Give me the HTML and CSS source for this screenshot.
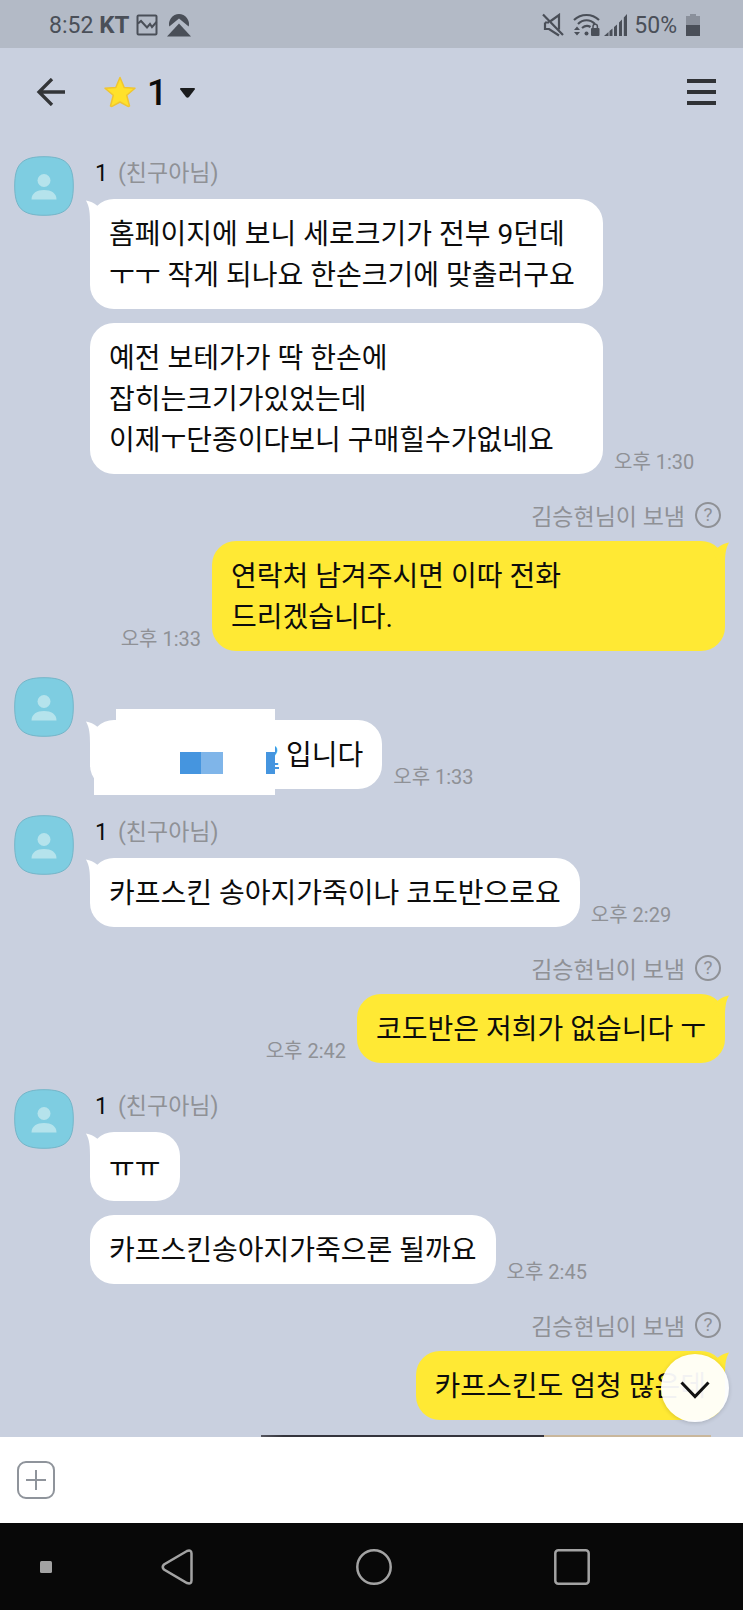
FILE: index.html
```html
<!DOCTYPE html>
<html lang="ko">
<head>
<meta charset="utf-8">
<meta name="viewport" content="width=device-width, initial-scale=1">
<title>채팅</title>
<link rel="stylesheet" href="styles.css">
</head>
<body>
<svg class="defs" aria-hidden="true">
  <symbol id="avatar" viewBox="0 0 60 60">
    <path d="M30 .7C52 .7 59.3 8 59.3 30S52 59.3 30 59.3.7 52 .7 30 8 .7 30 .7Z" fill="#7ecde1" stroke="#74b5c8" stroke-width="1"/>
    <circle cx="30" cy="24.500" r="6.500" fill="#b5e3ec"/>
    <path d="M17.500 43.500C17.500 37 23 34 30 34s12.500 3 12.500 9.500Z" fill="#b5e3ec"/>
  </symbol>
  <symbol id="tail" viewBox="0 0 16 24">
    <path d="M0 1.500C4 2 8 4 11 6.500L16 12 10 24H4C4 14 3.500 8 0 1.500Z" fill="currentColor"/>
  </symbol>
</svg>
<div class="app">
  <div class="status">
    <span class="clock">8:52</span>
    <span class="carrier">KT</span>
    <svg class="st-image" width="22" height="22" viewBox="0 0 22 22"><rect x="1.500" y="1.500" width="19" height="19" rx="1" fill="none" stroke="#4a4f58" stroke-width="2"/><path d="M2 9.500l3-2.500 6 6.500 3-3.500 2 3 4.500-5" fill="none" stroke="#4a4f58" stroke-width="2"/></svg>
    <svg class="st-cloud" width="24" height="24" viewBox="0 0 24 24" fill="#4a4f58"><path d="M2.300 13.500A10 10 0 1 1 21.700 13.500L12 5.500Z"/><path d="M12 10.500L24 23.500H0Z"/></svg>
    <span class="grow"></span>
    <svg class="st-mute" width="22" height="24" viewBox="0 0 22 24" fill="none" stroke="#4a4f58" stroke-width="2.200"><path d="M1 1.500L21 22M8 8.500L17 2V16.500M3 9.500V16H7L17 22.500M3 9.500H7"/></svg>
    <svg class="st-wifi" width="27" height="24" viewBox="0 0 27 24"><g fill="none" stroke="#4a4f58" stroke-width="2.200"><path d="M1 7C8 .3 19 .3 26 7M5 11C10 6 17 6 22 11M9 15C12 12.500 15 12.500 17.500 14"/></g><g fill="#4a4f58"><path d="M4 13.500l3 3.500H1ZM1 19h6l-3 3.500Z"/><circle cx="13.500" cy="20.500" r="2"/><rect x="18" y="15" width="8.500" height="8" rx="1"/></g><path d="M20 15v-1.500a2.200 2.200 0 0 1 4.400 0V15" fill="none" stroke="#4a4f58" stroke-width="1.500"/></svg>
    <svg class="st-signal" width="23" height="24" viewBox="0 0 23 24" fill="#4a4f58"><path d="M0 23l4.500-4V23ZM5.500 18l3-2.500V23h-3ZM10 14l3-2.500V23h-3ZM15 9.500l3-3V23h-3ZM19.800 4.500l3.200-3.500V23h-3.200Z"/></svg>
    <span class="percent">50%</span>
    <svg width="14" height="24" viewBox="0 0 14 24"><path d="M4 1h6v2h4v9H0V3h4Z" fill="#8a909b"/><path d="M0 12h14v11H0Z" fill="#4a4f58"/></svg>
  </div>

  <header class="topbar">
    <button class="icon-btn" aria-label="뒤로"><svg width="30" height="28" viewBox="0 0 30 28" fill="none" stroke="#333538" stroke-width="3.300"><path d="M29 14H3M16 1L3 14 16 27"/></svg></button>
    <svg class="star" width="32" height="32" viewBox="0 0 32 32"><path d="M16 1.500l4.200 10 10.800.8-8.300 7 2.800 10.700q-1 .8-2 .2L16 26l-7.500 4.200q-1 .6-2-.2L9.300 19.300 1 12.300l10.800-.8Z" fill="#ffe12b" stroke="#f0c531" stroke-width="1.500" stroke-linejoin="round"/></svg>
    <button class="title">1<svg width="15" height="10" viewBox="0 0 15 10" fill="#1b1c1e"><path d="M1 0h13q1.500.3.700 1.500L9 9q-1.500 1.300-3 0L.3 1.500Q-.5.300 1 0Z"/></svg></button>
    <span class="grow"></span>
    <button class="icon-btn" aria-label="메뉴"><svg width="29" height="26" viewBox="0 0 29 26" fill="#303236"><path d="M0 0h29v4H0ZM0 11h29v4H0ZM0 22h29v4H0Z"/></svg></button>
  </header>

  <main class="feed">
    <section class="received">
      <svg class="avatar" role="img" aria-label="프로필"><use href="#avatar"/></svg>
      <div class="stack">
        <div class="name"><b>1</b><span>(친구아님)</span></div>
        <div class="row"><p class="bubble wide"><svg class="tail"><use href="#tail"/></svg>홈페이지에 보니 세로크기가 전부 9던데<br>ㅜㅜ 작게 되나요 한손크기에 맞출러구요</p></div>
        <div class="row"><p class="bubble wide">예전 보테가가 딱 한손에<br>잡히는크기가있었는데<br>이제ㅜ단종이다보니 구매힐수가없네요</p><time>오후 1:30</time></div>
      </div>
    </section>

    <section class="sent">
      <div class="label">김승현님이 보냄<button class="help" aria-label="도움말">?</button></div>
      <div class="row"><time>오후 1:33</time><p class="bubble wide"><svg class="tail"><use href="#tail"/></svg>연락처 남겨주시면 이따 전화<br>드리겠습니다.</p></div>
    </section>

    <section class="received">
      <svg class="avatar" role="img" aria-label="프로필"><use href="#avatar"/></svg>
      <div class="stack">
        <div class="name"></div>
        <div class="row"><p class="bubble"><svg class="tail"><use href="#tail"/></svg><a class="phone" href="#">2</a> 입니다<svg class="mask" width="185" height="86" viewBox="0 0 185 86"><path d="M26 0H185V86H4V22H26Z" fill="#fff"/><path d="M0 22h5v36H0Z" fill="#fff"/><path d="M90 43h21v22H90ZM176 43h9v22h-9Z" fill="#4595df"/><path d="M111 43h22v22h-22Z" fill="#7fb5e9"/></svg></p><time>오후 1:33</time></div>
      </div>
    </section>

    <section class="received">
      <svg class="avatar" role="img" aria-label="프로필"><use href="#avatar"/></svg>
      <div class="stack">
        <div class="name"><b>1</b><span>(친구아님)</span></div>
        <div class="row"><p class="bubble"><svg class="tail"><use href="#tail"/></svg>카프스킨 송아지가죽이나 코도반으로요</p><time>오후 2:29</time></div>
      </div>
    </section>

    <section class="sent">
      <div class="label">김승현님이 보냄<button class="help" aria-label="도움말">?</button></div>
      <div class="row"><time>오후 2:42</time><p class="bubble"><svg class="tail"><use href="#tail"/></svg>코도반은 저희가 없습니다 ㅜ</p></div>
    </section>

    <section class="received">
      <svg class="avatar" role="img" aria-label="프로필"><use href="#avatar"/></svg>
      <div class="stack">
        <div class="name"><b>1</b><span>(친구아님)</span></div>
        <div class="row"><p class="bubble"><svg class="tail"><use href="#tail"/></svg>ㅠㅠ</p></div>
        <div class="row"><p class="bubble">카프스킨송아지가죽으론 될까요</p><time>오후 2:45</time></div>
      </div>
    </section>

    <section class="sent">
      <div class="label">김승현님이 보냄<button class="help" aria-label="도움말">?</button></div>
      <div class="row"><p class="bubble"><svg class="tail"><use href="#tail"/></svg>카프스킨도 엄청 많은데</p></div>
      <div class="photo"></div>
    </section>
    <button class="jump" aria-label="맨 아래로"><svg width="30" height="18" viewBox="0 0 30 18" fill="none" stroke="#111" stroke-width="3"><path d="M1.500 1.500L15 15.500 28.500 1.500"/></svg></button>
  </main>

  <form class="composer">
    <button type="button" class="icon-btn" aria-label="추가"><svg width="38" height="38" viewBox="0 0 38 38" fill="none" stroke="#8f949b" stroke-width="2"><rect x="1" y="1" width="36" height="36" rx="8"/><path d="M9 19H29M19 9V29"/></svg></button>
    <input class="entry" type="text" aria-label="메시지 입력">
  </form>

  <nav class="sysnav">
    <button class="icon-btn" aria-label="내비게이션 고정"><svg width="12" height="12" viewBox="0 0 12 12"><rect width="12" height="12" rx="1.500" fill="#a3a3a3"/></svg></button>
    <button class="icon-btn" aria-label="뒤로 가기"><svg width="32" height="36" viewBox="0 0 32 36" fill="none" stroke="#a3a3a3" stroke-width="2.500"><path d="M26 2L3 15.500Q.500 18 3 20.500L26 34Q30.500 35.500 30.500 31.500V4.500Q30.500.500 26 2Z"/></svg></button>
    <button class="icon-btn" aria-label="홈"><svg width="36" height="36" viewBox="0 0 36 36" fill="none" stroke="#a3a3a3" stroke-width="2.500"><circle cx="18" cy="18" r="16.700"/></svg></button>
    <button class="icon-btn" aria-label="최근 앱"><svg width="36" height="36" viewBox="0 0 36 36" fill="none" stroke="#a3a3a3" stroke-width="2.500"><rect x="1.300" y="1.300" width="33.400" height="33.400" rx="3"/></svg></button>
  </nav>
</div>
</body>
</html>
```

FILE: styles.css
```css
* { box-sizing: border-box; }
body {
  margin: 0;
  font-family: Roboto, "Noto Sans CJK KR", sans-serif;
  color: #0c0c0c;
}
p { margin: 0; }
svg { display: block; flex: none; }
button {
  padding: 0;
  border: 0;
  background: none;
  font: inherit;
  color: inherit;
}
.defs { position: absolute; width: 0; height: 0; }
.grow { flex: 1; }
.icon-btn { display: flex; align-items: center; justify-content: center; }

.app {
  display: flex;
  flex-direction: column;
  min-height: 100vh;
  background: #c9d0df;
}

.status {
  display: flex;
  align-items: center;
  height: 48px;
  padding: 2px 43px 0 49px;
  background: #b3bac6;
  color: #4a4f58;
  font-size: 23px;
}
.carrier { margin: 0 6px 0 6px; font-size: 24px; font-weight: 700; }
.st-cloud { margin-left: 9px; }
.st-wifi { margin: 0 4px 0 9px; }
.percent { margin: 0 9px 0 7px; }

.topbar {
  display: flex;
  align-items: center;
  height: 88px;
  padding: 0 27px 0 36px;
}
.star { margin: 0 11px 0 38px; }
.title {
  display: flex;
  align-items: center;
  gap: 13px;
  padding-top: 2px;
  font-size: 36px;
  line-height: 40px;
  font-weight: 500;
}

.feed {
  position: relative;
  display: flex;
  flex: 1;
  flex-direction: column;
  gap: 26px;
  padding: 20px 18px 0 14px;
}
.received { display: flex; gap: 16px; }
.avatar { width: 60px; height: 60px; }
.stack {
  display: flex;
  flex: 1;
  flex-direction: column;
  gap: 14px;
  min-width: 0;
}
.name {
  display: flex;
  gap: 10px;
  height: 29px;
  padding: 0 5px;
  font-size: 23px;
  line-height: 36px;
  color: #8f9196;
}
.name b { font-weight: 400; color: #0c0c0c; }
.row { display: flex; align-items: flex-end; gap: 11px; }
.bubble {
  position: relative;
  padding: 15px 19px 13px;
  border-radius: 24px;
  background: #fff;
  font-size: 28px;
  line-height: 41px;
}
.wide { width: 513px; }
.tail {
  position: absolute;
  top: 0;
  left: -4px;
  width: 16px;
  height: 24px;
  color: #fff;
}
time {
  flex: none;
  font-size: 20px;
  line-height: 24px;
  color: #8f9196;
}

.sent { display: flex; flex-direction: column; align-items: flex-end; }
.label {
  display: flex;
  align-items: center;
  gap: 10px;
  height: 29px;
  margin: 0 4px 12px 0;
  font-size: 23px;
  color: #8f9196;
}
.help {
  width: 26px;
  height: 26px;
  border: 2px solid #8f9196;
  border-radius: 50%;
  font-size: 19px;
  line-height: 22px;
}
.sent .bubble { background: #ffe934; }
.sent .tail { right: -4px; left: auto; color: #ffe934; transform: scaleX(-1); }

.phone { display: inline-block; width: 170px; text-align: right; color: #4595df; }
.mask { position: absolute; top: -11px; left: 0; }

.photo {
  width: 450px;
  height: 2px;
  margin: 15px 14px 0 0;
  background: linear-gradient(90deg, #55565f 0, #34343c 5% 63%, #c9b79c 63% 100%);
}
.jump {
  position: absolute;
  right: 14px;
  bottom: 15px;
  display: flex;
  align-items: center;
  justify-content: center;
  width: 68px;
  height: 68px;
  padding-top: 4px;
  border-radius: 50%;
  background: rgba(255, 255, 255, .95);
  box-shadow: 0 1px 4px rgba(0, 0, 0, .16);
}

.composer {
  display: flex;
  align-items: center;
  gap: 16px;
  height: 86px;
  padding: 0 17px;
  background: #fff;
}
.entry {
  flex: 1;
  height: 48px;
  border: 0;
  background: none;
  font: inherit;
  font-size: 28px;
}
.sysnav {
  display: grid;
  grid-template-columns: 78px 1fr 1fr 1fr;
  align-items: center;
  height: 87px;
  padding-right: 72px;
  background: #080808;
}
.sysnav .icon-btn:first-child { padding-left: 14px; }
```
